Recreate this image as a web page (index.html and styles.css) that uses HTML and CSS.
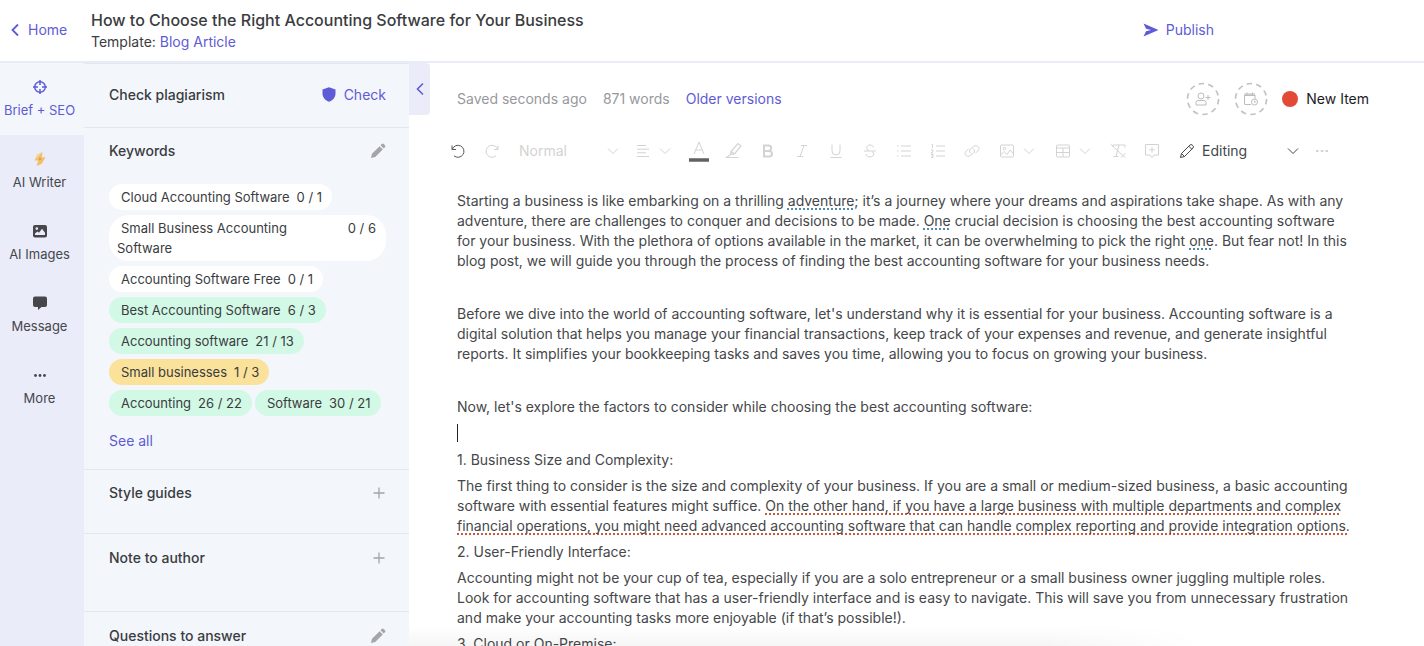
FILE: index.html
```html
<!DOCTYPE html>
<html lang="en">
<head>
  <meta charset="UTF-8">
  <meta name="viewport" content="width=device-width, initial-scale=1.0">
  <title>How to Choose the Right Accounting Software for Your Business</title>
  <link rel="stylesheet" href="styles.css">
</head>
<body>
  <div class="app">
    <header class="topbar">
      <a class="home" href="#">
        <svg width="8" height="14" viewBox="0 0 8 14"><path d="M7 1.5 1.5 7 7 12.5" fill="none" stroke="currentColor" stroke-width="1.8"/></svg>
        Home
      </a>
      <div class="doc-info">
        <h1>How to Choose the Right Accounting Software for Your Business</h1>
        <p>Template: <a href="#">Blog Article</a></p>
      </div>
      <button class="publish">
        <svg width="16" height="14" viewBox="0 0 16 14"><path d="M.5.5 15.5 7 .5 13.5 3 8.200 8 7 3 5.800z" fill="currentColor"/></svg>
        Publish
      </button>
    </header>

    <div class="workspace">
      <nav class="rail">
        <a class="rail-item active" href="#">
          <svg width="16" height="16" viewBox="0 0 16 16" fill="none" stroke="currentColor" stroke-width="1.500"><circle cx="8" cy="8" r="5.300"/><path d="M8 1v5M8 10v5M1 8h5M10 8h5"/></svg>
          Brief + SEO
        </a>
        <a class="rail-item" href="#">
          <svg width="16" height="16" viewBox="0 0 16 16"><path d="M10.500 1 5 3.500 2.500 9.500 6.200 9.500 4.500 15 9.500 13 13.500 6.500 9.800 6.200z" fill="#f0bf68"/><path d="M10.500 1 5 3.500 2.500 9.500z" fill="#f8d9a0"/><circle cx="8" cy="8" r=".8" fill="#d9643c"/></svg>
          AI Writer
        </a>
        <a class="rail-item" href="#">
          <svg width="16" height="16" viewBox="0 0 16 16"><rect x="1" y="2" width="14" height="12.500" rx="2" fill="#45474a"/><circle cx="4.800" cy="5.600" r="1.300" fill="#eaecfa"/><path d="M3 12V10.500L5.500 8.500 7 9.800 10 5.800 13 9.800V12z" fill="#eaecfa"/></svg>
          AI Images
        </a>
        <a class="rail-item" href="#">
          <svg width="16" height="16" viewBox="0 0 16 16"><path d="M3 1.500h10a2 2 0 0 1 2 2v6.500a2 2 0 0 1-2 2H9.500L6 15v-3H3a2 2 0 0 1-2-2V3.500a2 2 0 0 1 2-2z" fill="#45474a"/></svg>
          Message
        </a>
        <a class="rail-item" href="#">
          <svg width="16" height="16" viewBox="0 0 16 16" fill="#45474a"><circle cx="3.500" cy="8.500" r="1.400"/><circle cx="8" cy="8.500" r="1.400"/><circle cx="12.500" cy="8.500" r="1.400"/></svg>
          More
        </a>
      </nav>

      <aside class="panel">
        <section class="section plagiarism">
          <h2>Check plagiarism</h2>
          <button class="check">
            <svg width="14" height="15" viewBox="0 0 14 15"><path d="M7 .3 13.500 2.500V6.500C13.500 10.500 10.500 13.500 7 14.800 3.500 13.500.5 10.500.5 6.500V2.500z" fill="currentColor"/></svg>
            Check
          </button>
        </section>

        <section class="section keywords">
          <div class="section-head">
            <h2>Keywords</h2>
            <button class="icon-btn" aria-label="Edit keywords"><svg width="16" height="16" viewBox="0 0 16 16" fill="#a3a5a8"><path d="M1 15 2 10.800 9.600 3.200 12.800 6.400 5.200 14zM10.500 2.300 11.700 1.100a1.400 1.400 0 0 1 2 0l1.200 1.200a1.400 1.400 0 0 1 0 2L13.700 5.500z"/></svg></button>
          </div>
          <ul class="chips">
            <li class="chip"><span>Cloud Accounting Software</span><b>0 / 1</b></li>
            <li class="chip"><span>Small Business Accounting Software</span><b>0 / 6</b></li>
            <li class="chip"><span>Accounting Software Free</span><b>0 / 1</b></li>
            <li class="chip good"><span>Best Accounting Software</span><b>6 / 3</b></li>
            <li class="chip good"><span>Accounting software</span><b>21 / 13</b></li>
            <li class="chip low"><span>Small businesses</span><b>1 / 3</b></li>
            <li class="chip good"><span>Accounting</span><b>26 / 22</b></li>
            <li class="chip good"><span>Software</span><b>30 / 21</b></li>
          </ul>
          <a class="see-all" href="#">See all</a>
        </section>

        <section class="section guides">
          <div class="section-head">
            <h2>Style guides</h2>
            <button class="icon-btn" aria-label="Add style guide"><svg width="14" height="14" viewBox="0 0 14 14"><path d="M7 1.500v11M1.500 7h11" stroke="#a3a5a8" stroke-width="1.300"/></svg></button>
          </div>
        </section>

        <section class="section note">
          <div class="section-head">
            <h2>Note to author</h2>
            <button class="icon-btn" aria-label="Add note"><svg width="14" height="14" viewBox="0 0 14 14"><path d="M7 1.500v11M1.500 7h11" stroke="#a3a5a8" stroke-width="1.300"/></svg></button>
          </div>
        </section>

        <section class="section questions">
          <div class="section-head">
            <h2>Questions to answer</h2>
            <button class="icon-btn" aria-label="Edit questions"><svg width="16" height="16" viewBox="0 0 16 16" fill="#a3a5a8"><path d="M1 15 2 10.800 9.600 3.200 12.800 6.400 5.200 14zM10.500 2.300 11.700 1.100a1.400 1.400 0 0 1 2 0l1.200 1.200a1.400 1.400 0 0 1 0 2L13.700 5.500z"/></svg></button>
          </div>
        </section>
      </aside>

      <main class="editor">
        <button class="collapse" aria-label="Collapse panel">
          <svg width="8" height="14" viewBox="0 0 8 14"><path d="M7 1.500 1.500 7 7 12.500" fill="none" stroke="currentColor" stroke-width="1.600"/></svg>
        </button>

        <div class="status">
          <span>Saved seconds ago</span>
          <span>871 words</span>
          <a href="#">Older versions</a>
          <div class="status-right">
            <button class="round" aria-label="Assign">
              <svg class="ring" width="34" height="34" viewBox="0 0 34 34"><circle cx="17" cy="17" r="15.500" fill="none" stroke="#c3c3c3" stroke-width="1.700" stroke-dasharray="5.500 4.240"/></svg>
              <svg width="16" height="16" viewBox="0 0 16 16" fill="none" stroke="#bdbdbd"><circle cx="6" cy="5" r="3"/><path d="M1 14v-2.500q0-2 2-2h6q2 0 2 2V14zM10.500 6.500h5M13 4v5"/></svg>
            </button>
            <button class="round" aria-label="Due date">
              <svg class="ring" width="34" height="34" viewBox="0 0 34 34"><circle cx="17" cy="17" r="15.500" fill="none" stroke="#c3c3c3" stroke-width="1.700" stroke-dasharray="5.500 4.240"/></svg>
              <svg width="16" height="16" viewBox="0 0 16 16" fill="none" stroke="#bdbdbd"><path d="M8 13.500H2q-.5 0-.5-.5V4h10.500v4M1.500 4.500h10.500M4 1.500V4M9.500 1.500V4M1.500 3h10.500"/><circle cx="11.500" cy="11" r="3"/><path d="M11.500 9.500V11H13"/></svg>
            </button>
            <button class="state"><i class="dot"></i>New Item</button>
          </div>
        </div>

        <div class="toolbar">
          <button class="tool dark" aria-label="Undo"><svg width="16" height="16" viewBox="0 0 16 16"><path d="M2 2.500V6.500H6M2.300 6.300A6 6 0 1 1 4 12.800"/></svg></button>
          <button class="tool" aria-label="Redo"><svg width="16" height="16" viewBox="0 0 16 16"><path d="M14 2.500V6.500H10M13.700 6.300A6 6 0 1 0 12 12.800"/></svg></button>
          <div class="select-wrap style-select">
            <select aria-label="Text style"><option>Normal</option></select>
            <svg width="12" height="8" viewBox="0 0 12 8"><path d="M1 1.500 6 6.500 11 1.500"/></svg>
          </div>
          <button class="tool split" aria-label="Align">
            <svg width="16" height="16" viewBox="0 0 16 16"><path d="M2 2.500h9M2 6.200h12M2 9.800h9M2 13.500h12"/></svg>
            <svg width="12" height="8" viewBox="0 0 12 8"><path d="M1 1.500 6 6.500 11 1.500"/></svg>
          </button>
          <button class="tool color" aria-label="Text color"><svg width="20" height="22" viewBox="0 0 20 22"><path d="M5 14 10 2 15 14M6.700 10h6.600"/><path d="M0 20h20" stroke="#606266" stroke-width="3.500"/></svg></button>
          <button class="tool" aria-label="Highlight"><svg width="18" height="18" viewBox="0 0 18 18"><path d="M6 9.500 13 1.500 16 4 9.500 12 5.500 12.500zM6 9.500l3.500 2.500M5.500 12.500 1.500 15.500h12" stroke-width="1.200"/></svg></button>
          <button class="tool bold" aria-label="Bold"><svg width="16" height="16" viewBox="0 0 16 16"><path d="M4 2.500h4.500a2.700 2.700 0 0 1 0 5.400H4zM4 7.900h5.200a2.800 2.800 0 0 1 0 5.600H4z"/></svg></button>
          <button class="tool" aria-label="Italic"><svg width="16" height="16" viewBox="0 0 16 16"><path d="M7 2.500h6M3 13.500h6M10 2.500 6 13.500"/></svg></button>
          <button class="tool" aria-label="Underline"><svg width="16" height="16" viewBox="0 0 16 16"><path d="M4 1.500v6.500a4 4 0 0 0 8 0V1.500M2.500 14.500h11"/></svg></button>
          <button class="tool" aria-label="Strikethrough"><svg width="16" height="16" viewBox="0 0 16 16"><path d="M11.500 4.500C11 2.500 9.500 2 8 2 4 2 3.500 6.500 7 7.500M2 8h12M10 8.500C13 10.500 11.500 14 8 14 6 14 4.500 13 4.200 11"/></svg></button>
          <button class="tool" aria-label="Bulleted list"><svg width="16" height="16" viewBox="0 0 16 16"><path d="M5 3h10M5 8h10M5 13h10M1 3h1.500M1 8h1.500M1 13h1.500"/></svg></button>
          <button class="tool" aria-label="Numbered list"><svg width="16" height="16" viewBox="0 0 16 16"><path d="M6 3h9M6 8h9M6 13h9M1.500 1.500h1V5M1 7h2v1.500L1 10h2M1 11.500h2v3H1M1.500 13H3"/></svg></button>
          <button class="tool" aria-label="Link"><svg width="18" height="16" viewBox="0 0 18 16"><path d="M8 10.500C6 9 6.500 7 7.500 6L10.500 3.500C14 1 18 5 14.800 8L12.500 10M10 5.500C12 7 11.500 9 10.500 10L7.500 12.500C4 15 0 11 3.200 8L5.500 6"/></svg></button>
          <button class="tool split" aria-label="Image">
            <svg width="16" height="16" viewBox="0 0 16 16"><rect x="1.500" y="2" width="13" height="12" rx="1"/><circle cx="5.500" cy="5.500" r="1.200"/><path d="M1.500 12 5 8.500 8 11.500 11 7 14.500 11"/></svg>
            <svg width="12" height="8" viewBox="0 0 12 8"><path d="M1 1.500 6 6.500 11 1.500"/></svg>
          </button>
          <button class="tool split" aria-label="Table">
            <svg width="16" height="16" viewBox="0 0 16 16"><rect x="1.500" y="2" width="13" height="12" rx="1"/><path d="M1.500 5h13M1.500 9.500h13M8 5v9"/></svg>
            <svg width="12" height="8" viewBox="0 0 12 8"><path d="M1 1.500 6 6.500 11 1.500"/></svg>
          </button>
          <button class="tool" aria-label="Clear formatting"><svg width="18" height="16" viewBox="0 0 18 16"><path d="M4 4V2h12v2.500M10 2 7 13.500M4.500 13.500h5M1.500 1 16.500 15M12 14.500 16.500 10"/></svg></button>
          <button class="tool" aria-label="Comment"><svg width="16" height="16" viewBox="0 0 16 16"><path d="M1.500 1.500h13v10.500H10L8 14.500 6 12H1.500zM8 4v5.500M5.200 6.800h5.600"/></svg></button>
          <div class="select-wrap mode-select">
            <svg width="16" height="16" viewBox="0 0 16 16"><path d="M1.500 14.500 2.500 10.500 11 2Q12 1 13.200 2L14 2.800Q15 4 14 5L5.500 13.500zM9.800 3.200l3 3M2.500 10.500l3 3"/></svg>
            <select aria-label="Mode"><option>Editing</option></select>
            <svg width="12" height="8" viewBox="0 0 12 8"><path d="M1 1.500 6 6.500 11 1.500"/></svg>
          </div>
          <button class="tool" aria-label="More tools"><svg width="14" height="4" viewBox="0 0 14 4"><path d="M1 2h2.500M5.800 2h2.500M10.500 2H13" stroke-width="2"/></svg></button>
        </div>

        <article class="content" contenteditable="true" spellcheck="false" role="textbox" aria-label="Article">
          <p>Starting a business is like embarking on a thrilling <span class="hint">adventure</span>; it’s a journey where your dreams and aspirations take shape. As with any adventure, there are challenges to conquer and decisions to be made. <span class="hint">One</span> crucial decision is choosing the best accounting software for your business. With the plethora of options available in the market, it can be overwhelming to pick the right <span class="hint">one</span>. But fear not! In this blog post, we will guide you through the process of finding the best accounting software for your business needs.</p>
          <p class="empty"></p>
          <p>Before we dive into the world of accounting software, let's understand why it is essential for your business. Accounting software is a digital solution that helps you manage your financial transactions, keep track of your expenses and revenue, and generate insightful reports. It simplifies your bookkeeping tasks and saves you time, allowing you to focus on growing your business.</p>
          <p class="empty"></p>
          <p>Now, let's explore the factors to consider while choosing the best accounting software:</p>
          <p class="empty"><span class="caret"></span></p>
          <p>1. Business Size and Complexity:</p>
          <p>The first thing to consider is the size and complexity of your business. If you are a small or medium-sized business, a basic accounting software with essential features might suffice. <span class="issue">On the other hand, if you have a large business with multiple departments and complex financial operations, you might need advanced accounting software that can handle complex reporting and provide integration options.</span></p>
          <p>2. User-Friendly Interface:</p>
          <p>Accounting might not be your cup of tea, especially if you are a solo entrepreneur or a small business owner juggling multiple roles. Look for accounting software that has a user-friendly interface and is easy to navigate. This will save you from unnecessary frustration and make your accounting tasks more enjoyable (if that’s possible!).</p>
          <p>3. Cloud or On-Premise:</p>
        </article>
      </main>
    </div>
  </div>
</body>
</html>
```
FILE: styles.css
```css
* {
  box-sizing: border-box;
}
body {
  font-family: Inter, "Liberation Sans", sans-serif;
  font-size: 14px;
  line-height: 20px;
  margin: 0;
  color: #3a3c40;
  background-color: #fff;
}
h1, h2, p, ul {
  margin: 0;
  padding: 0;
}
a {
  color: #5f5bd6;
  text-decoration: none;
}
button, select {
  font: inherit;
  color: inherit;
  background: none;
  border: none;
  padding: 0;
  cursor: pointer;
}
svg {
  display: block;
  flex: none;
}
.app {
  display: flex;
  flex-direction: column;
  height: 100vh;
  overflow: hidden;
}

/* Top bar */
.topbar {
  display: flex;
  align-items: center;
  flex: none;
  height: 63px;
  padding: 0 210px 2px 11px;
  border-bottom: 2px solid #e9ebf8;
}
.home {
  display: flex;
  align-items: center;
  gap: 9px;
  width: 80px;
}
.doc-info {
  flex: 1;
}
h1 {
  font-size: 16px;
  font-weight: 500;
  line-height: 24px;
}
.publish {
  display: flex;
  align-items: center;
  gap: 7px;
  color: #5f5bd6;
}

.workspace {
  display: flex;
  flex: 1;
  min-height: 0;
}

/* Left rail */
.rail {
  width: 84px;
  flex: none;
  background-color: #eaecfa;
}
.rail-item {
  display: flex;
  flex-direction: column;
  align-items: center;
  gap: 5px;
  height: 72px;
  padding-top: 16px;
  padding-right: 5px;
  font-size: 13px;
  color: #45474a;
}
.rail-item.active {
  background-color: #f3f6fb;
  color: #5f5bd6;
}

/* Brief panel */
.panel {
  width: 325px;
  flex: none;
  background-color: #f3f6fb;
}
.section {
  padding: 13px 23px 0 25px;
  border-bottom: 1px solid #e3e8ef;
}
.section-head {
  display: flex;
  justify-content: space-between;
  align-items: center;
}
h2 {
  font-size: 14px;
  font-weight: 500;
  line-height: 20px;
}
.plagiarism {
  display: flex;
  justify-content: space-between;
  align-items: center;
  height: 65px;
  padding-top: 0;
  padding-bottom: 2px;
  border-top: 1px solid #e3e8ef;
}
.check {
  display: flex;
  align-items: center;
  gap: 8px;
  color: #5f5bd6;
}
.keywords {
  height: 342px;
}
.guides {
  height: 64px;
}
.note {
  height: 78px;
  padding-top: 14px;
}
.questions {
  padding-top: 14px;
}
.chips {
  display: flex;
  flex-wrap: wrap;
  gap: 5px 3px;
  margin-top: 23px;
  list-style: none;
}
.chip {
  display: flex;
  max-width: 100%;
  padding: 3px 10px 3px 8px;
  border-radius: 20px;
  font-size: 13px;
  background-color: #fff;
}
.chip span {
  text-indent: 4px;
}
.chip b {
  margin-left: 7px;
  font-weight: 400;
  white-space: nowrap;
}
.chip.good {
  background-color: #d2f9e5;
}
.chip.low {
  background-color: #fbe29a;
}
.see-all {
  display: block;
  margin-top: 15px;
}

/* Editor */
.editor {
  position: relative;
  flex: 1;
  min-width: 0;
  padding: 19px 46px 0 48px;
}
.editor::after {
  content: "";
  position: absolute;
  left: 0;
  right: 224px;
  bottom: 0;
  height: 20px;
  background: linear-gradient(rgba(0,0,0,0), rgba(0,0,0,0.04));
  mask-image: linear-gradient(to right, #000 80%, transparent);
  pointer-events: none;
}
.collapse {
  position: absolute;
  top: 0;
  left: 0;
  display: flex;
  align-items: center;
  justify-content: center;
  width: 21px;
  height: 52px;
  color: #5f5bd6;
  background-color: #eaecfa;
  border-radius: 0 4px 4px 0;
}
.status {
  display: flex;
  align-items: center;
  gap: 16px;
  height: 34px;
  color: #97999c;
}
.status-right {
  display: flex;
  gap: 14px;
  margin-left: auto;
  padding-right: 9px;
}
.round {
  position: relative;
  display: flex;
  align-items: center;
  justify-content: center;
  width: 34px;
  height: 34px;
}
.ring {
  position: absolute;
  top: 0;
  left: 0;
}
.state {
  display: flex;
  align-items: center;
  gap: 8px;
  color: #1c1c1e;
}
.dot {
  width: 16px;
  height: 16px;
  border-radius: 50%;
  background-color: #e34a35;
}
.toolbar {
  display: flex;
  align-items: center;
  gap: 4px;
  height: 30px;
  margin: 20px 0 0 -14px;
  color: #d3d3d3;
}
.toolbar svg {
  fill: none;
  stroke: currentColor;
}
.tool {
  display: flex;
  align-items: center;
  justify-content: center;
  flex: none;
  width: 30px;
  height: 30px;
}
.tool.dark {
  color: #55575a;
}
.tool.color {
  width: 32px;
}
.tool.bold svg {
  stroke-width: 2;
}
.tool.split {
  width: 52px;
  gap: 8px;
}
.select-wrap {
  display: flex;
  align-items: center;
  flex: none;
}
.select-wrap select {
  flex: 1;
  min-width: 0;
  appearance: none;
}
.style-select {
  width: 112px;
  padding: 0 4px 0 8px;
}
.mode-select {
  width: 132px;
  gap: 7px;
  padding: 0 4px 0 8px;
  color: #45474a;
}
.content {
  display: flex;
  flex-direction: column;
  gap: 6px;
  margin: 25px 24px 0 0;
  outline: none;
  color: #45474a;
}
.empty {
  height: 21px;
}
.caret {
  display: block;
  width: 1px;
  height: 18px;
  margin-top: 1px;
  background-color: #222;
}
.hint {
  text-decoration: underline dotted #4f8bb0 2px;
  text-underline-offset: 2px;
  text-decoration-skip-ink: none;
}
.issue {
  text-decoration: underline dotted #c65a3f 2px;
  text-underline-offset: 2px;
  text-decoration-skip-ink: none;
}
```
